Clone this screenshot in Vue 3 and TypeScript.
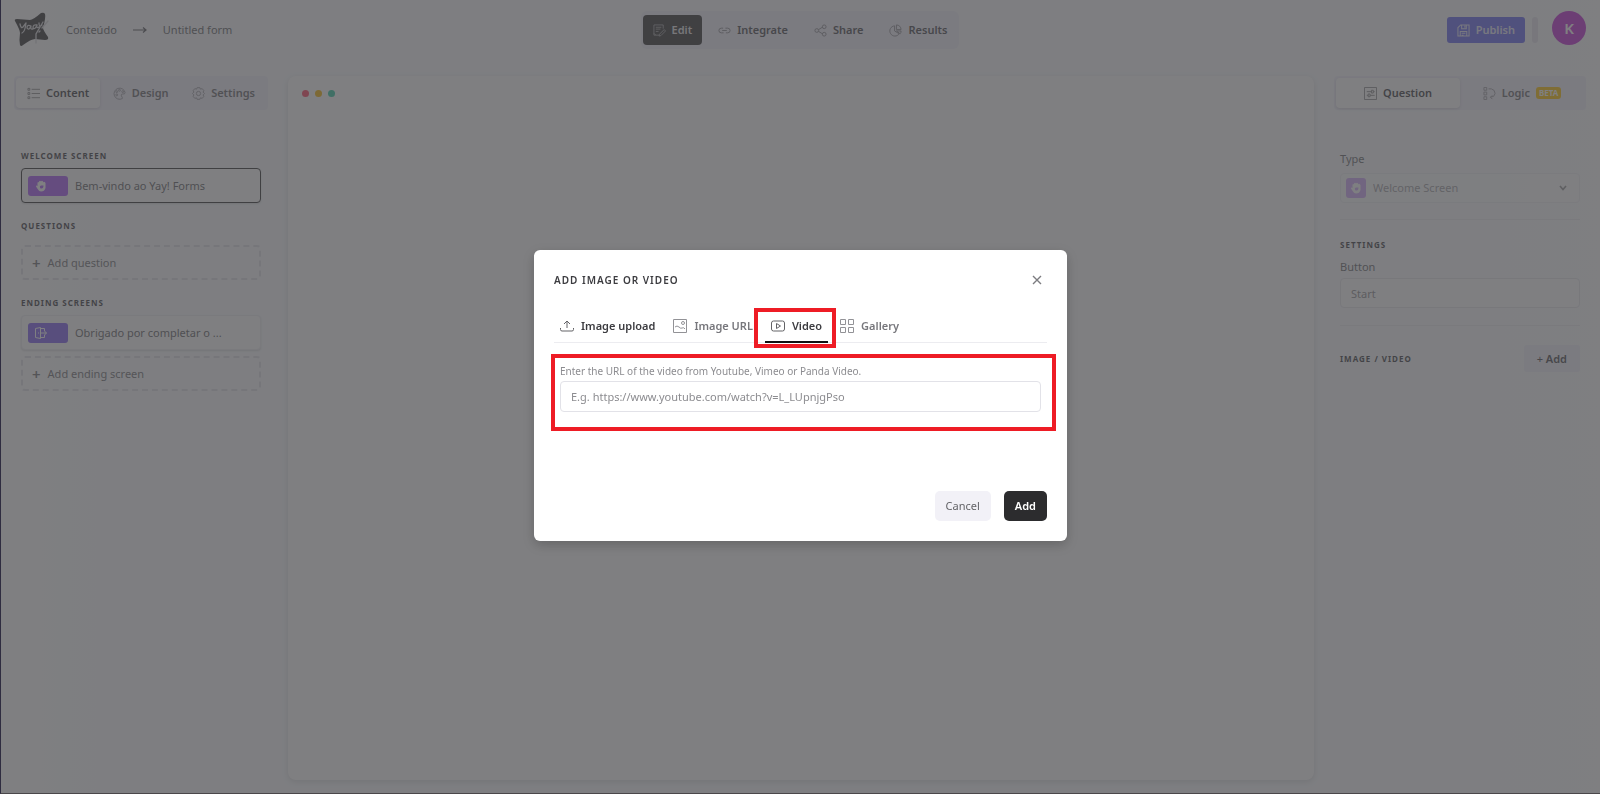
<script setup lang="ts">
import { ref } from 'vue'

interface NavItem { id: string; label: string }

const stages: NavItem[] = [
  { id: 'edit', label: 'Edit' },
  { id: 'integrate', label: 'Integrate' },
  { id: 'share', label: 'Share' },
  { id: 'results', label: 'Results' },
]
const panels: NavItem[] = [
  { id: 'content', label: 'Content' },
  { id: 'design', label: 'Design' },
  { id: 'settings', label: 'Settings' },
]
const sources: NavItem[] = [
  { id: 'upload', label: 'Image upload' },
  { id: 'url', label: 'Image URL' },
  { id: 'video', label: 'Video' },
  { id: 'gallery', label: 'Gallery' },
]

const stage = ref('edit')
const panel = ref('content')
const side = ref('question')
const source = ref('video')
const videoUrl = ref('')
const buttonText = ref('')
</script>

<template>
  <div class="shell">
    <header class="topbar">
      <div class="crumbs">
        <a href="#" class="logo" aria-label="Yay! Forms">
          <svg width="36" height="36" viewBox="0 0 36 36">
            <path d="M3 7Q0 7 1 9Q6 18 6 21Q5 28 6 33Q7 35 9 33Q17 27 21 27L31 28Q35 28 34 25Q29 18 29 16Q32 5 31 2Q30 0 27 1Q19 8 16 8Z" fill="#2c2c2e" />
            <path d="M6 12Q7 17 9 15L12 11M12 11Q11 20 8 21M17 14Q13 12 13 16Q15 19 17 14Q16 18 19 17M23 13Q19 12 19 16Q21 18 23 13Q22 17 25 15M25 11Q25 16 28 13M29 10L22 22V31M34 9L28 16M26 19L25 20" fill="none" stroke="#d8d8da" stroke-width="1.300" stroke-linecap="round" />
          </svg>
        </a>
        <a href="#">Conteúdo</a>
        <svg class="arrow" width="14" height="8" viewBox="0 0 14 8" fill="none" stroke="#55555a" stroke-width="1.2"><path d="M0 4H13M10 1.500L13 4L10 6.500" /></svg>
        <a href="#">Untitled form</a>
      </div>

      <nav class="stages">
        <button v-for="s in stages" :key="s.id" type="button" :class="{ active: stage === s.id }" @click="stage = s.id">
          <svg width="13" height="13" viewBox="0 0 14 14" fill="none" stroke="currentColor" stroke-width="1">
            <path v-if="s.id === 'edit'" d="M11 5V1H1V12H7M3 3.500H9M3 5.500H8M3 8H6M1 10L3 12M7 11L12 6L13.500 7.500L8.500 12.500L6.500 13Z" />
            <path v-else-if="s.id === 'integrate'" d="M6 9.500H3.500A2.500 2.500 0 0 1 3.500 4.500H5.500M8 4.500H10.500A2.500 2.500 0 0 1 10.500 9.500H8.500M4.500 7H9.500" />
            <path v-else-if="s.id === 'share'" d="M5 6L9 3.500M5 8L9 10.500M1 7A2 2 0 1 0 5 7A2 2 0 1 0 1 7M9 3A2 2 0 1 0 13 3A2 2 0 1 0 9 3M9 11A2 2 0 1 0 13 11A2 2 0 1 0 9 11" />
            <path v-else d="M6 2A5.500 5.500 0 1 0 11 10.500L6 7.500ZM8 1A5 5 0 0 1 13 6H8ZM8 7.500H13Q13 9.500 12 10.500Z" />
          </svg>
          {{ s.label }}
        </button>
      </nav>

      <div class="account">
        <button type="button" class="publish">
          <svg width="13" height="13" viewBox="0 0 14 14" fill="none" stroke="currentColor" stroke-width="1.1"><path d="M1 4L4 1H13V13H1ZM5 1V5H10V1M8.500 2V4M3.500 13V8H10.500V13M5 10H9M5 12H7" /></svg>
          Publish
        </button>
        <span class="pill"></span>
        <button type="button" class="avatar" aria-label="Account">K</button>
      </div>
    </header>

    <div class="workspace">
      <aside>
        <div class="tabs">
          <button v-for="p in panels" :key="p.id" type="button" :class="{ active: panel === p.id }" @click="panel = p.id">
            <svg width="13" height="13" viewBox="0 0 14 14" fill="none" stroke="currentColor" stroke-width="1">
              <path v-if="p.id === 'content'" d="M5 2.500H14M5 7H14M5 11.500H14M1 1.500H3V3.500H1ZM1 6H3V8H1ZM1 10.500H3V12.500H1Z" />
              <template v-else-if="p.id === 'design'">
                <path d="M10 12.500A6 6 0 1 1 13 6Q13 8 10.500 7.500Q8.500 7.500 9 9.500Q10.500 11.500 10 12.500Z" />
                <circle cx="4" cy="5" r="1" /><circle cx="7" cy="3.500" r="1" /><circle cx="10.500" cy="5" r="1" /><circle cx="4" cy="8.500" r="1" />
              </template>
              <template v-else>
                <path d="M5.500 .700H8.500L9 2.300L11 1.800L12.700 3.800L12 5.500L13.500 7L12 8.500L12.700 10.200L11 12.200L9 11.700L8.500 13.300H5.500L5 11.700L3 12.200L1.300 10.200L2 8.500L.500 7L2 5.500L1.300 3.800L3 1.800L5 2.300Z" />
                <circle cx="7" cy="7" r="2.300" />
              </template>
            </svg>
            {{ p.label }}
          </button>
        </div>

        <div class="outline">
          <h2>Welcome screen</h2>
          <button type="button" class="card selected">
            <span class="tag violet">
              <svg width="12" height="12" viewBox="0 0 12 12"><path d="M2.500 5V2.500Q3.500 1.500 4 2.500V1.500Q5 0 6 1.500Q7 0 8 1.500V2.500Q9 1 10.500 3V8Q9.500 11.500 6 11.500Q4 11.500 3 9.500L1 6.500Q1 5 2.500 6Z" fill="#fff" /><path d="M5.500 8.500Q4 6 6 5.500H8.500Q8.500 9 6 8.500Z" fill="#a855f7" /></svg>
            </span>
            Bem-vindo ao Yay! Forms
          </button>
          <h2>Questions</h2>
          <button type="button" class="card add spaced"><b>+</b>Add question</button>
          <h2>Ending screens</h2>
          <button type="button" class="card">
            <span class="tag indigo">
              <svg width="12" height="12" viewBox="0 0 12 12" fill="none" stroke="#fff" stroke-width="1"><path d="M.500 1.500L5.500 .500V11.500L.500 10.500ZM5.500 1.500H9.500V4M5.500 10.500H9.500V8M5 6H11.500M9.500 4L11.500 6L9.500 8M3.500 5.500V6.500" /></svg>
            </span>
            Obrigado por completar o ...
          </button>
          <button type="button" class="card add"><b>+</b>Add ending screen</button>
        </div>
      </aside>

      <main class="canvas"><i class="red"></i><i class="yellow"></i><i class="green"></i></main>

      <aside>
        <div class="tabs halves">
          <button type="button" :class="{ active: side === 'question' }" @click="side = 'question'">
            <svg width="13" height="13" viewBox="0 0 14 14" fill="none" stroke="currentColor" stroke-width="1"><path d="M.500 .500H13.500V13.500H.500ZM3 5H8M10 5H11.500M8 3.500H10V6.500H8ZM3 9H4.500M6.500 9H11.500M4.500 7.500H6.500V10.500H4.500Z" /></svg>
            Question
          </button>
          <button type="button" :class="{ active: side === 'logic' }" @click="side = 'logic'">
            <svg width="13" height="13" viewBox="0 0 14 14" fill="none" stroke="currentColor" stroke-width="1"><path d="M1 .500H4V3.500H1ZM1 5.500H4V8.500H1ZM1 10.500H4V13.500H1ZM6 2H9Q13 3 13 7Q12.500 11 8 11M10 9L8 11L10 13" /></svg>
            Logic <span class="beta">BETA</span>
          </button>
        </div>

        <div class="props">
          <label for="type">Type</label>
          <div class="type-field">
            <span class="hand">
              <svg width="12" height="12" viewBox="0 0 12 12"><path d="M2.500 5V2.500Q3.500 1.500 4 2.500V1.500Q5 0 6 1.500Q7 0 8 1.500V2.500Q9 1 10.500 3V8Q9.500 11.500 6 11.500Q4 11.500 3 9.500L1 6.500Q1 5 2.500 6Z" fill="#fff" /><path d="M5.500 8.500Q4 6 6 5.500H8.500Q8.500 9 6 8.500Z" fill="#a855f7" /></svg>
            </span>
            <select id="type"><option>Welcome Screen</option></select>
            <svg class="chevron" width="8" height="6" viewBox="0 0 8 6" fill="none" stroke="#2c2c2e" stroke-width="1.600"><path d="M1 1L4 4.500L7 1" /></svg>
          </div>
          <hr>
          <h2>Settings</h2>
          <label for="button-text">Button</label>
          <input id="button-text" v-model="buttonText" type="text" placeholder="Start">
          <hr class="last">
          <div class="media"><h2>Image / Video</h2><button type="button"><span>+</span> Add</button></div>
        </div>
      </aside>
    </div>

    <div class="overlay">
      <section class="dialog" role="dialog" aria-modal="true" aria-labelledby="dialog-title">
        <div class="dialog-head">
          <h1 id="dialog-title">Add image or video</h1>
          <button type="button" class="close" aria-label="Close">
            <svg width="10" height="10" viewBox="0 0 10 10" fill="none" stroke="#7c7c80" stroke-width="1.400"><path d="M1 1L9 9M9 1L1 9" /></svg>
          </button>
        </div>
        <div class="sources">
          <button v-for="s in sources" :key="s.id" type="button" :class="[s.id, { active: source === s.id }]" @click="source = s.id">
            <svg width="14" height="14" viewBox="0 0 14 14" fill="none" stroke="currentColor" stroke-width="1">
              <path v-if="s.id === 'upload'" d="M.500 9V10.500Q.500 12 2 12H12Q13.500 12 13.500 10.500V9M7 9V2M4 5L7 2L10 5" />
              <path v-else-if="s.id === 'url'" d="M.500 .500H13.500V13.500H.500ZM2 8Q4 6 6 8T9 9Q11 8 12 10M8.500 4A1.500 1.500 0 1 0 11.500 4A1.500 1.500 0 1 0 8.500 4" />
              <path v-else-if="s.id === 'video'" d="M2.500 2H11.500Q13.500 2 13.500 4V10Q13.500 12 11.500 12H2.500Q.500 12 .500 10V4Q.500 2 2.500 2ZM5.500 4.500V9.500L9.500 7Z" />
              <path v-else d="M.500 .500H5.500V5.500H.500ZM8.500 .500H13.500V5.500H8.500ZM.500 8.500H5.500V13.500H.500ZM8.500 8.500H13.500V13.500H8.500Z" />
            </svg>
            {{ s.label }}
          </button>
        </div>
        <div class="video-field">
          <label for="video-url">Enter the URL of the video from Youtube, Vimeo or Panda Video.</label>
          <input id="video-url" v-model="videoUrl" type="url" placeholder="E.g. https://www.youtube.com/watch?v=L_LUpnjgPso">
        </div>
        <div class="actions">
          <button type="button" class="cancel">Cancel</button>
          <button type="button" class="confirm">Add</button>
        </div>
      </section>
    </div>
  </div>
</template>

<style>
body { margin: 0; }
</style>

<style scoped>
* { box-sizing: border-box; }
.shell {
  display: flex;
  flex-direction: column;
  min-height: 100vh;
  padding: 11px 14px 14px;
  background: linear-gradient(90deg, #fff, #fafcff 100px, #fafcff calc(100% - 100px), #fdfdff);
  color: #45454a;
  font: 11px/16px "Noto Sans", "Open Sans", sans-serif;
}
button, input, select { font: inherit; color: inherit; }
button { border: 0; padding: 0; background: none; white-space: nowrap; cursor: pointer; }
a { color: inherit; text-decoration: none; }
h1, h2 { margin: 0; text-transform: uppercase; }
h2 { font-size: 8px; line-height: 12px; font-weight: 700; letter-spacing: 1px; color: #38383c; }
svg { flex: none; display: block; }

.topbar { display: grid; grid-template-columns: 1fr auto 1fr; align-items: start; height: 65px; }
.crumbs { display: flex; align-items: center; gap: 16px; height: 38px; color: #606064; }
.stages { display: flex; gap: 6px; padding: 4px 2px; border-radius: 6px; background: #f1f0fb; }
.stages button { display: flex; align-items: center; gap: 6px; height: 30px; padding: 0 10px; border-radius: 4px; font-weight: 600; }
.stages .active { background: #2c2c2e; color: #e4e4e6; }
.stages svg, .tabs svg { opacity: .6; }
.account { display: flex; justify-content: flex-end; align-items: center; height: 38px; gap: 7px; }
.publish { display: flex; align-items: center; gap: 6px; height: 26px; padding: 0 10px; border-radius: 3px; background: #6366f1; color: #e6e6fa; font-weight: 600; }
.pill { width: 6px; height: 26px; border-radius: 3px; background: #e6e5ee; }
.avatar { width: 34px; height: 34px; margin: 0 0 4px 7px; border-radius: 50%; background: #c026d3; color: #fff; font-size: 15px; font-weight: 600; }

.workspace { flex: 1; display: grid; grid-template-columns: 254px minmax(0, 1fr) 252px; gap: 20px; }
.tabs { display: flex; justify-content: space-between; height: 34px; padding: 2px; border-radius: 4px; background: #f1f0fb; }
.tabs button { display: flex; align-items: center; justify-content: center; gap: 6px; padding: 0 11px; border-radius: 4px; font-weight: 600; color: #66666a; }
.tabs .active { background: #fff; color: #38383c; box-shadow: 0 1px 3px #0002; }
.halves button { flex: 1; }
.beta { padding: 0 3px; border-radius: 3px; background: #ffc400; color: #fff; font-size: 8px; line-height: 12px; font-weight: 700; }

.outline { display: flex; flex-direction: column; padding: 40px 7px 0; }
.card { display: flex; align-items: center; gap: 7px; height: 35px; margin: 6px 0 0; padding: 0 6px; border: 1px solid #ededf2; border-radius: 4px; background: #fff; box-shadow: 0 1px 2px #0002; color: #606064; }
.card + h2 { margin-top: 17px; }
.selected { border-color: #2c2c2e; }
.tag { display: flex; align-items: center; width: 40px; height: 20px; padding-left: 7px; border-radius: 3px; }
.violet { background: #a855f7; }
.indigo { background: #7c5cf0; }
.add { padding: 0 9px; border: 2px dashed #e2e2e8; background: none; box-shadow: none; color: #707074; }
.add b { font-size: 15px; font-weight: 600; line-height: 16px; }
.spaced { margin-top: 13px; }

.canvas { display: flex; gap: 6px; padding: 14px; border-radius: 8px; background: #fff; box-shadow: 0 2px 6px #0002; }
.canvas i { width: 7px; height: 7px; border-radius: 50%; }
.red { background: #ff4060; }
.yellow { background: #f7b500; }
.green { background: #2cc9a0; }

.props { display: flex; flex-direction: column; padding: 41px 6px 0; }
.props label { color: #66666a; }
.type-field { position: relative; margin-top: 6px; opacity: .5; }
.type-field select, .props input { display: block; width: 100%; height: 30px; padding: 0 10px; border: 1px solid #e6e6ec; border-radius: 4px; background: #fff; outline: 0; }
.type-field select { padding-left: 32px; appearance: none; opacity: 1; }
.hand { position: absolute; left: 6px; top: 5px; display: grid; place-items: center; width: 20px; height: 20px; border-radius: 3px; background: #a855f7; }
.chevron { position: absolute; right: 13px; top: 12px; }
.props hr { width: 100%; margin: 16px 0 19px; border: 0; border-top: 1px solid #eeeef2; }
.props h2 { margin-bottom: 8px; }
.props input { margin-top: 3px; }
.props input::placeholder { color: #8c8c90; opacity: 1; }
.props hr.last { margin-top: 17px; }
.media { display: flex; justify-content: space-between; align-items: center; }
.props .media h2 { margin: 0; }
.media button { height: 27px; padding: 0 13px; border-radius: 3px; background: #f1f0fb; font-weight: 600; }
.media span { font-weight: 400; }

.overlay { position: fixed; inset: 0; display: grid; place-items: center; padding-bottom: 2px; border-left: 1px solid #2f2c40; border-bottom: 1px solid #4a474a; background: rgba(73, 73, 75, .7); background-clip: padding-box; }
.dialog { width: 533px; max-width: 100%; padding: 20px; border-radius: 6px; background: #fff; box-shadow: 0 4px 12px #0003; }
.dialog-head { display: flex; justify-content: space-between; align-items: center; height: 20px; }
h1 { font-size: 10px; line-height: 16px; font-weight: 600; letter-spacing: 1px; color: #3c3c40; }
.close { padding: 5px; }
.sources { display: flex; gap: 6px; margin-top: 18px; border-bottom: 1px solid #ececf0; }
.sources button { position: relative; display: flex; align-items: center; gap: 7px; height: 35px; padding: 3px 6px 0; margin-bottom: -1px; border-bottom: 2px solid transparent; font-weight: 600; color: #77777c; }
.sources .upload { color: #3c3c40; }
.sources .active { border-color: #111; color: #3c3c40; }
.sources svg { opacity: .8; }
.sources .active::after { content: ""; position: absolute; inset: 0 -8px -7px -11px; border: 4px solid #ee1c25; }
.video-field { position: relative; margin-top: 21px; padding: 0 6px; }
.video-field::after { content: ""; position: absolute; inset: -10px -9px -19px -3px; border: 4px solid #ee1c25; pointer-events: none; }
.video-field label { display: block; font-size: 10px; line-height: 14px; color: #8c8c90; }
.video-field input { display: block; width: 100%; height: 31px; margin-top: 3px; padding: 0 10px; border: 1px solid #e2e2e8; border-radius: 4px; outline: 0; }
.video-field input::placeholder { color: #8c8c90; opacity: 1; }
.actions { display: flex; justify-content: flex-end; gap: 13px; margin-top: 79px; }
.actions button { height: 30px; padding: 0 11px; border-radius: 5px; }
.cancel { background: #f2f1f7; color: #636367; }
.confirm { background: #2c2c2e; color: #fff; font-weight: 600; }
.actions .cancel { background: #f2f1f7; }
.actions .confirm { background: #2c2c2e; }
</style>
